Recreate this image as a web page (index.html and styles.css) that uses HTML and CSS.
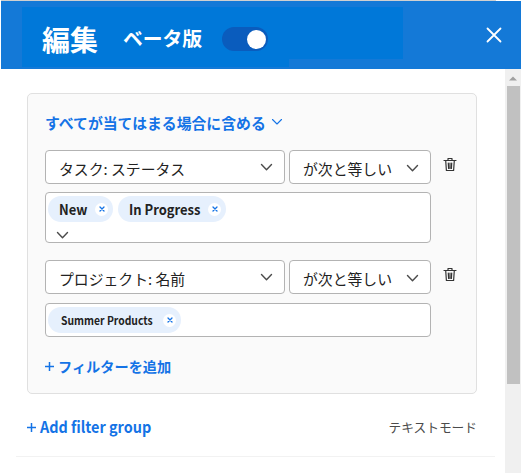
FILE: index.html
```html
<!DOCTYPE html>
<html lang="ja">
<head>
<meta charset="utf-8">
<title>編集</title>
<link rel="stylesheet" href="styles.css">
</head>
<body>
<header class="header">
  <h1 class="title">編集</h1>
  <span class="beta">ベータ版</span>
  <span class="toggle"><span class="knob"></span></span>
  <svg class="close" width="16" height="16" viewBox="0 0 16 16"><path d="M1.5 1.5l13 13M14.5 1.5l-13 13"/></svg>
</header>
<div class="body">
  <main class="content">
    <section class="card">
      <div class="match">すべてが当てはまる場合に含める<svg class="chev-blue" width="12" height="8" viewBox="0 0 12 8"><path d="M1.5 1.5L6 6l4.500-4.500"/></svg></div>
      <div class="row">
        <div class="select field"><span>タスク: ステータス</span><svg class="chev" width="13" height="9" viewBox="0 0 13 9"><path d="M1.500 1.500l5 5.200 5-5.200"/></svg></div>
        <div class="select op"><span>が次と等しい</span><svg class="chev" width="13" height="9" viewBox="0 0 13 9"><path d="M1.500 1.500l5 5.200 5-5.200"/></svg></div>
        <svg class="trash" width="14" height="15" viewBox="0 0 14 15"><path d="M1 3.500h12M5 3.500V1.500h4v2M2.700 3.500l.7 10h7.200l.7-10M5.300 6l.3 5.500M7 6v5.500M8.700 6l-.3 5.500"/></svg>
      </div>
      <div class="values tall">
        <div class="tags">
          <span class="tag new"><b class="tag-label">New</b><i class="x"><svg width="6" height="6" viewBox="0 0 6 6"><path d="M1 1l4 4M5 1L1 5"/></svg></i></span>
          <span class="tag progress"><b class="tag-label">In Progress</b><i class="x"><svg width="6" height="6" viewBox="0 0 6 6"><path d="M1 1l4 4M5 1L1 5"/></svg></i></span>
        </div>
        <svg class="chev more" width="13" height="9" viewBox="0 0 13 9"><path d="M1.500 1.500l5 5.200 5-5.200"/></svg>
      </div>
      <div class="row second">
        <div class="select field"><span>プロジェクト: 名前</span><svg class="chev" width="13" height="9" viewBox="0 0 13 9"><path d="M1.500 1.500l5 5.200 5-5.200"/></svg></div>
        <div class="select op"><span>が次と等しい</span><svg class="chev" width="13" height="9" viewBox="0 0 13 9"><path d="M1.500 1.500l5 5.200 5-5.200"/></svg></div>
        <svg class="trash" width="14" height="15" viewBox="0 0 14 15"><path d="M1 3.500h12M5 3.500V1.500h4v2M2.700 3.500l.7 10h7.200l.7-10M5.300 6l.3 5.500M7 6v5.500M8.700 6l-.3 5.500"/></svg>
      </div>
      <div class="values">
        <div class="tags">
          <span class="tag summer"><b class="tag-label">Summer Products</b><i class="x"><svg width="6" height="6" viewBox="0 0 6 6"><path d="M1 1l4 4M5 1L1 5"/></svg></i></span>
        </div>
      </div>
      <div class="add"><svg class="plus" width="9" height="9" viewBox="0 0 9 9"><path d="M4.500 0v9M0 4.500h9"/></svg>フィルターを追加</div>
    </section>
    <div class="footer">
      <div class="add-group"><svg class="plus" width="9" height="9" viewBox="0 0 9 9"><path d="M4.500 0v9M0 4.500h9"/></svg><span class="group-label">Add filter group</span></div>
      <div class="text-mode">テキストモード</div>
    </div>
  </main>
  <div class="scrollbar">
    <svg width="8" height="5" viewBox="0 0 8 5"><path d="M0 4.500L4 .5l4 4z" fill="#a0a0a0"/></svg>
    <div class="thumb"></div>
  </div>
</div>
</body>
</html>
```
FILE: styles.css
```css
* { box-sizing: border-box; }
body {
  margin: 0;
  height: 473px;
  overflow: hidden;
  background: #fff;
  color: #222;
  font-family: "Noto Sans CJK JP", "Noto Sans", sans-serif;
  font-size: 14.85px;
  line-height: 20px;
}
svg { display: block; flex: none; }
path { stroke-linecap: round; stroke-linejoin: round; }

.header {
  display: flex;
  align-items: center;
  height: 69px;
  margin-left: 1px;
  padding: 9px 19px 0 41px;
  color: #fff;
  background:
    linear-gradient(#d0d0d0, #d0d0d0) 0 0 / 495px 1px no-repeat,
    linear-gradient(#fff, #fff) 0 0 / 100% 1px no-repeat,
    linear-gradient(#0078d9, #0078d9) 21px 7px / 381px 52px no-repeat,
    linear-gradient(#0078d9, #0078d9) 21px 59px / 267px 8px no-repeat,
    #1479d7;
}
.title { width: 81px; margin: 0; font-size: 28px; line-height: 36px; font-weight: 700; white-space: nowrap; }
.beta { width: 99px; font-size: 19.8px; font-weight: 700; white-space: nowrap; transform: translateY(-1px); }
.toggle {
  display: flex;
  align-items: center;
  justify-content: flex-end;
  width: 46px;
  height: 24px;
  padding-right: 2px;
  border-radius: 12px;
  background: #0a5cbd;
}
.knob { width: 19px; height: 19px; border-radius: 50%; background: #fff; }
.close { margin: -9px 0 0 auto; fill: none; stroke: #fff; stroke-width: 1.8; }

.body { display: flex; height: 404px; }
.content { width: 505px; padding-top: 24px; }
.card {
  width: 450px;
  height: 301px;
  margin-left: 27px;
  padding: 19px 0 0 17px;
  border: 1px solid #e0e0e0;
  border-radius: 5px;
  background: #fafafa;
}
.match {
  display: flex;
  align-items: center;
  height: 20px;
  gap: 5px;
  color: #1473e6;
  font-size: 14.85px;
  font-weight: 700;
}
.chev-blue { fill: none; stroke: #1473e6; stroke-width: 1.1; margin-top: -2px; }
.row { display: flex; gap: 4px; margin-top: 17px; }
.row.second { margin-top: 17px; }
.select {
  display: flex;
  align-items: center;
  justify-content: space-between;
  height: 34px;
  padding: 3px 11px 0 13px;
  border: 1px solid #b3b3b3;
  border-radius: 4px;
  background: #fff;
  white-space: nowrap;
}
.field { width: 240px; }
.field .chev { margin-top: -3px; }
.op { width: 142px; }
.chev { fill: none; stroke: #4b4b4b; stroke-width: 1.4; }
.trash { margin: 7px 0 0 8px; fill: none; stroke: #333; stroke-width: 1.2; }
.values {
  width: 386px;
  height: 34px;
  margin-top: 9px;
  padding: 3px 2px;
  border: 1px solid #b3b3b3;
  border-radius: 4px;
  background: #fff;
}
.values.tall { height: 51px; margin-top: 8px; }
.tags { display: flex; gap: 5px; }
.tag {
  display: flex;
  align-items: center;
  justify-content: space-between;
  height: 26px;
  padding: 0 5px 0 11px;
  border-radius: 13px;
  background: #e6f0fd;
  font-size: 14px;
  white-space: nowrap;
}
.tag-label { font-weight: 700; transform: scaleX(0.925); transform-origin: left; }
.new { width: 65px; }
.progress { width: 108px; }
.summer { width: 133px; padding-left: 13px; font-size: 11.5px; }
.summer .tag-label { transform: scaleX(0.9); }
.x {
  display: flex;
  align-items: center;
  justify-content: center;
  width: 13px;
  height: 13px;
  border-radius: 50%;
  background: #fff;
}
.x svg { fill: none; stroke: #1473e6; stroke-width: 1.3; }
.more { margin: 9px 0 0 8px; }
.add, .add-group {
  display: flex;
  align-items: center;
  gap: 4px;
  color: #1473e6;
  font-weight: 700;
}
.add { margin-top: 19px; font-size: 14.2px; }
.plus { fill: none; stroke: #1473e6; stroke-width: 1.5; }
.footer {
  display: flex;
  align-items: center;
  justify-content: space-between;
  width: 479px;
  height: 63px;
  margin-left: 16px;
  padding: 4px 18px 0 11px;
  border-bottom: 1px solid #f2f2f2;
}
.add-group { font-size: 16px; }
.group-label { transform: translateY(-1px) scaleX(0.9); transform-origin: left; }
.text-mode { color: #4b4b4b; font-size: 12.7px; }
.scrollbar {
  display: flex;
  flex-direction: column;
  align-items: center;
  width: 16px;
  padding-top: 7px;
  background: #f0f0f0;
}
.thumb { width: 13px; height: 298px; margin-top: 5px; background: #c1c1c1; }
```
